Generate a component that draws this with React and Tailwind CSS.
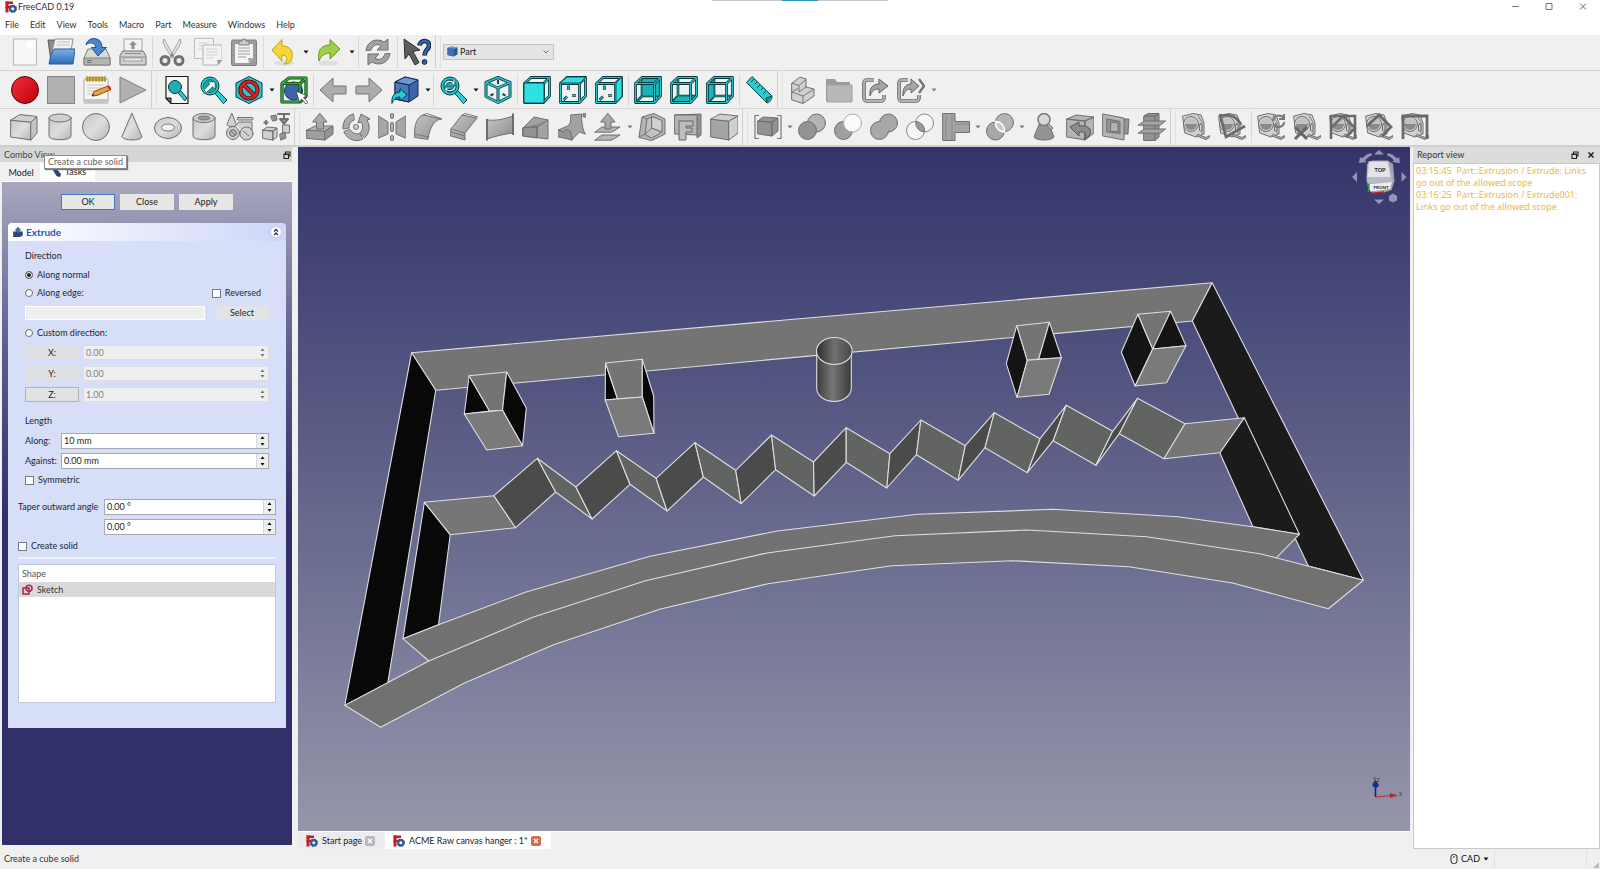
import React from "react";

/* ---------- icon helpers ---------- */

const G = { fill: "#b4b4b4", stroke: "#6f6f6f", strokeWidth: 1, strokeLinejoin: "round", strokeLinecap: "round" };
const L = { ...G, fill: "#d0d0d0" };
const D = { ...G, fill: "#939393" };
const T = { fill: "#22cfd2", stroke: "#06383c", strokeWidth: 1, strokeLinejoin: "round", strokeLinecap: "round" };

function Ic({ children }) {
  return (
    <svg viewBox="0 0 28 28" className="h-7 w-7 shrink-0" fill="none" aria-hidden="true">
      {children}
    </svg>
  );
}

const Gradients = () => (
  <svg className="absolute h-0 w-0" aria-hidden="true">
    <defs>
      <linearGradient id="lg" x1="0" y1="0" x2="1" y2="1">
        <stop offset="0" stopColor="#c6c6c6" />
        <stop offset="0.5" stopColor="#dedede" />
        <stop offset="1" stopColor="#b4b4b4" />
      </linearGradient>
      <linearGradient id="mg" x1="0" y1="0" x2="1" y2="1">
        <stop offset="0" stopColor="#c4c4c4" />
        <stop offset="1" stopColor="#8e8e8e" />
      </linearGradient>
      <linearGradient id="red" x1="0" y1="0" x2="1" y2="1">
        <stop offset="0" stopColor="#f03038" />
        <stop offset="1" stopColor="#c00008" />
      </linearGradient>
      <linearGradient id="teal" x1="0" y1="0" x2="1" y2="1">
        <stop offset="0" stopColor="#3ae6e6" />
        <stop offset="1" stopColor="#16b4ba" />
      </linearGradient>
      <linearGradient id="blue" x1="0" y1="0" x2="0" y2="1">
        <stop offset="0" stopColor="#7ab0e8" />
        <stop offset="1" stopColor="#2f6cb8" />
      </linearGradient>
    </defs>
  </svg>
);

const Logo = ({ className }) => (
  <svg viewBox="0 0 12 12" className={className} aria-hidden="true">
    <g fill="#cc1c22">
      <rect x="0.5" y="0.5" width="3" height="11" />
      <rect x="0.5" y="0.5" width="7.5" height="2.6" />
      <rect x="0.5" y="4.8" width="5" height="2.2" />
    </g>
    <circle cx="7.8" cy="7.8" r="2.6" fill="none" stroke="#33599a" strokeWidth="2.2" />
    <circle cx="7.8" cy="7.8" r="3.7" fill="none" stroke="#33599a" strokeWidth="1.1" strokeDasharray="1.5 1.4" />
  </svg>
);

const Magnifier = ({ children }) => (
  <>
    <path d="M16 17l2.6-2.6L28 24l-3.2 3.4z" {...T} />
    <circle cx="11" cy="10" r="9" fill="#22cfd2" stroke="#06383c" strokeWidth="1" />
    <circle cx="11" cy="10" r="6.6" fill="#14a2a8" stroke="#0c6d72" strokeWidth="0.8" />
    {children}
  </>
);

const FACES = {
  front: "1,7 21,7 21,27 1,27",
  top: "1,7 8,1 27,1 21,7",
  right: "21,7 27,1 27,20 21,27",
  rear: "8,1 27,1 27,20 8,20",
  bottom: "1,27 8,20 27,20 21,27",
  left: "1,7 8,1 8,20 1,27",
};

function ViewCube({ face }) {
  const behind = ["rear", "bottom", "left"].includes(face);
  const back = behind ? "M8 2V20H26.500M8 20L2 26.500" : "M9.500 9.500V14M4.500 24L8 20.500M13 19.500H17";
  const front = "M1.500 7.500H20.500V26.500H1.500zM1.500 7.500L8 1.500H26.500V20L20.500 26.500M20.500 7.500L26.500 1.500";
  return (
    <Ic>
      <path d={back} stroke="#06383c" strokeWidth="2.600" />
      <path d={back} stroke="#22b8bc" strokeWidth="1.100" />
      {behind && <polygon points={FACES[face]} fill="#19b3b8" stroke="#06383c" strokeWidth="0.600" />}
      {!behind && <polygon points={FACES[face]} fill="url(#teal)" />}
      <path d={front} stroke="#06383c" strokeWidth="2.800" strokeLinejoin="round" />
      <path d={front} stroke="#25c4c8" strokeWidth="1.200" strokeLinejoin="round" />
      {!behind && <polygon points={FACES[face]} fill="#2fe0e0" stroke="#06383c" strokeWidth="0.800" />}
    </Ic>
  );
}

const isoEdges = "M14 1.500L26 6.500V20.500L14 26.500L2 20.500V6.500zM2 6.500L14 12L26 6.500M14 12V26.500";
const IsoCube = () => (
  <Ic>
    <path d="M14 4v4M6.500 19.500l3-1.500M21.500 19.500l-3-1.500" stroke="#0c4c50" strokeWidth="2" />
    <path d={isoEdges} stroke="#06383c" strokeWidth="3" strokeLinejoin="round" />
    <path d={isoEdges} stroke="#25c4c8" strokeWidth="1.400" strokeLinejoin="round" />
  </Ic>
);

function Tape({ children }) {
  return (
    <Ic>
      <path d="M1 3l10-2.500 8 1.500 3 8v11l-8 3L3 20z" {...L} />
      <path d="M16 2.500l4 7v12" stroke="#808080" strokeWidth="1" />
      <circle cx="9" cy="11" r="7.500" {...L} />
      <path d="M3 11a6 6 0 0 0 12 0z" fill="#8a8a8a" />
      <path d="M3 11a6 6 0 0 1 12 0z" fill="#c2c2c2" />
      <rect x="17.500" y="11" width="2.500" height="7" rx="1" {...L} />
      <path d="M15 23l9 3.500 4-2.500v-1.500l-4 2-8-3z" {...G} />
      {children}
    </Ic>
  );
}

const I = {
  newDoc: (
    <Ic>
      <rect x="2.500" y="1" width="23" height="26" fill="#f6f6f6" stroke="#b8b8b8" />
      <circle cx="19" cy="7" r="4" fill="#ffffff" />
    </Ic>
  ),
  open: (
    <Ic>
      <path d="M1 2h7l1 3h15v19H4z" fill="#8a8c88" stroke="#5c5e5a" />
      <path d="M8 1h18l-2 12H5z" fill="#f2f2f2" stroke="#8c8c8c" />
      <path d="M10 4h13M9.500 7h13" stroke="#bcbcbc" strokeWidth="1.200" />
      <path d="M7 11h21l-2 15H2l2-9z" fill="url(#blue)" stroke="#2a5c9c" />
    </Ic>
  ),
  save: (
    <Ic>
      <path d="M5 11h18l4 9v7H1v-7z" fill="#d8dad6" stroke="#7e807c" />
      <path d="M1 20h26v7H1z" fill="#b4b6b2" stroke="#7e807c" />
      <path d="M4 22.500h5M4 24.500h4" stroke="#6c6c6c" />
      <path d="M3 7C4 2 9-1 15 1.500c3 1.500 4 5 4 8h4.500L15 18 8.500 9.500H13C12 5 7 3 3 7z" fill="#4a86cc" stroke="#24518c" />
    </Ic>
  ),
  print: (
    <Ic>
      <rect x="5" y="1" width="18" height="13" fill="#f4f4f4" stroke="#a4a4a4" />
      <path d="M14 3l4 4h-2.500v4h-3V7H10z" fill="#8e8e8e" />
      <path d="M4 13h20l3 5v9H1v-9z" {...L} />
      <path d="M6 15.500h16M1.500 19h25" stroke="#8c8c8c" />
      <rect x="5" y="20" width="18" height="3" fill="#ececec" stroke="#9a9a9a" />
    </Ic>
  ),
  cut: (
    <Ic>
      <path d="M6 1l10 18-2 1L5 5zM22 1L12 19l2 1 9-15z" fill="#e8e8e8" stroke="#a0a0a0" />
      <circle cx="7" cy="22.500" r="4" stroke="#707070" strokeWidth="3" />
      <circle cx="21" cy="22.500" r="4" stroke="#707070" strokeWidth="3" />
      <circle cx="14" cy="17" r="1.500" fill="#808080" />
    </Ic>
  ),
  copy: (
    <Ic>
      <rect x="0.500" y="0.500" width="19" height="20" fill="#f3f3f3" stroke="#bdbdbd" />
      <path d="M4 5h11M4 8h11M4 11h6" stroke="#d4d4d4" />
      <path d="M9 7h19v15l-4 5H9z" fill="#f3f3f3" stroke="#b4b4b4" />
      <path d="M12 11h12M12 14h12M12 17h11M12 20h8" stroke="#d0d0d0" />
      <path d="M28 22h-5l1 5z" fill="#9a9a9a" />
    </Ic>
  ),
  paste: (
    <Ic>
      <rect x="1.500" y="2" width="25" height="25.500" rx="1.500" fill="#9c9c9c" stroke="#7e7e7e" />
      <path d="M5 6h18v14l-4 5H5z" fill="#f4f4f4" />
      <path d="M8 10h12M8 13h12M8 16h12M8 19h8" stroke="#bcbcbc" strokeWidth="1.300" />
      <path d="M9 3h3a2 2 0 0 1 4 0h3v4H9z" fill="#c8c8c8" stroke="#7e7e7e" />
      <path d="M23 20h-5l1 5z" fill="#aaa" />
    </Ic>
  ),
  undo: (
    <Ic>
      <ellipse cx="15" cy="25" rx="10" ry="2.500" fill="#dedede" />
      <path d="M3 12L13 1.500V8c9 0 12 6 9.500 14C21 25 18 26 15 26c4-3 4-9-2-9v6z" fill="#f5d838" stroke="#c8a010" strokeLinejoin="round" />
    </Ic>
  ),
  redo: (
    <Ic>
      <ellipse cx="13" cy="25" rx="10" ry="2.500" fill="#dedede" />
      <path d="M25 11L15 1.500V7C6 7 2 13 4 23c2-5 5-8 11-8v6z" fill="#9fd046" stroke="#689a20" strokeLinejoin="round" />
    </Ic>
  ),
  refresh: (
    <Ic>
      <path d="M2 12C3 4 12-1 20 4l4-3v11H13l4-4c-4-3-8-1-10 4z" {...G} fill="#a2a2a2" />
      <path d="M26 16c-1 8-10 13-18 8l-4 3V16h11l-4 4c4 3 8 1 10-4z" {...G} fill="#a2a2a2" />
    </Ic>
  ),
  whats: (
    <Ic>
      <path d="M1 1l16 11-7 1.500 6 11-4 2.500-6-11-4 5z" fill="#5c5f5c" stroke="#303230" />
      <path d="M16.500 7.500C17 2 26 1 26 7.500c0 4.500-4.500 4-4.500 10" stroke="#14223c" strokeWidth="4.600" />
      <path d="M16.500 7.500C17 2 26 1 26 7.500c0 4.500-4.500 4-4.500 10" stroke="#3a68a8" strokeWidth="2.400" />
      <circle cx="21.500" cy="24" r="2.400" fill="#3a68a8" stroke="#14223c" />
    </Ic>
  ),
  record: <Ic><circle cx="14" cy="14" r="13.500" fill="url(#red)" stroke="#4c0808" /></Ic>,
  stop: <Ic><rect x="0.500" y="0.500" width="27" height="27" fill="#b0b0b0" stroke="#858585" /></Ic>,
  macros: (
    <Ic>
      <rect x="1" y="3" width="24" height="24" rx="1" fill="#f6f6f4" stroke="#a8a8a4" />
      <path d="M1 23h24v4H1z" fill="#c4c4c0" />
      <path d="M3 1h20v4H3z" fill="#c8ac3c" />
      <path d="M4 0v6M7 0v6M10 0v6M13 0v6M16 0v6M19 0v6M22 0v6" stroke="#9c842c" />
      <path d="M4 9h17M4 12h17M4 15h12M4 18h9" stroke="#c4c4c4" />
      <path d="M9 20l2-4.500L25 10l3 3.500L14 19.500z" fill="#e8a040" stroke="#8a5010" />
      <path d="M24 10.500l2-1 2.500 3-1.500 1.500z" fill="#d02020" />
      <path d="M9 20l1-2 1.500 1.500z" fill="#222" />
    </Ic>
  ),
  play: <Ic><path d="M1 1L27 14L1 27z" fill="#b0b0b0" stroke="#808080" /></Ic>,
  fitAll: (
    <Ic>
      <path d="M3 0.500h22v27H8l-5-5z" fill="#f6f6f6" stroke="#1c1c1c" strokeWidth="1.200" />
      <path d="M3 22l5 0v5.500z" fill="#707070" stroke="#1c1c1c" />
      <path d="M15 16l2-2 7 8-2 2.500z" {...T} />
      <circle cx="12" cy="11" r="6.500" {...T} fill="#1cb0b6" />
    </Ic>
  ),
  fitSel: (
    <Ic>
      <Magnifier><path d="M5 14l6-6-2-2h7v7l-2.500-2.500-6 6z" fill="#fff" stroke="#083c40" strokeWidth="0.500" /></Magnifier>
    </Ic>
  ),
  drawStyle: (
    <Ic>
      <path d="M14 0.500L27 7v14l-13 6.500L1 21V7z" fill="#2cc4cc" stroke="#0a3c44" />
      <circle cx="14" cy="14" r="8.500" stroke="#4c0808" strokeWidth="4.200" />
      <path d="M8 8l12 12" stroke="#4c0808" strokeWidth="4.200" />
      <circle cx="14" cy="14" r="8.500" stroke="#d42428" strokeWidth="2.600" />
      <path d="M8 8l12 12" stroke="#d42428" strokeWidth="2.600" />
    </Ic>
  ),
  boxSel: (
    <Ic>
      <circle cx="13.500" cy="15" r="9" fill="#3c66a8" stroke="#16305c" />
      <path d="M2 7.500h18v18.500H2zM2 7.500L9 2h17v18l-6 6M20 7.500L26 2" stroke="#0c3c10" strokeWidth="3.200" strokeLinejoin="round" />
      <path d="M2 7.500h18v18.500H2zM2 7.500L9 2h17v18l-6 6M20 7.500L26 2" stroke="#34b03c" strokeWidth="1.600" strokeLinejoin="round" />
      <path d="M16 15l11 5-3.500 1.500 4.500 5-2 1.500-4.500-5-2 3.500z" fill="#fff" stroke="#222" strokeWidth="0.700" />
    </Ic>
  ),
  prev: <Ic><path d="M1 14L14 2v8h13v8H14v8z" fill="#adadad" stroke="#757575" /></Ic>,
  next: <Ic><path d="M27 14L14 2v8H1v8h13v8z" fill="#adadad" stroke="#757575" /></Ic>,
  linkNav: (
    <Ic>
      <path d="M4 6l10-5 13 3v16l-9 6-14-3z" fill="#3a66aa" stroke="#12284c" />
      <path d="M4 6l14 3v17l-14-3z" fill="#4a78bc" stroke="#12284c" />
      <path d="M4 6l10-5 13 3-9 5z" fill="#6a98d4" stroke="#12284c" />
      <path d="M1 27c-1-7 3-11 8-11v-3.500l7 6.500-7 6v-4c-4 0-6 2-8 6z" {...T} />
    </Ic>
  ),
  syncView: (
    <Ic>
      <Magnifier>
        <path d="M6 9c1-4 7-5 9-1.500M15 4v4h-4M16 11c-1 4-7 5-9 1.500M7 16v-4h4" stroke="#083c40" strokeWidth="2.600" />
        <path d="M6 9c1-4 7-5 9-1.500M15 4v4h-4M16 11c-1 4-7 5-9 1.500M7 16v-4h4" stroke="#dff" strokeWidth="1.200" />
      </Magnifier>
    </Ic>
  ),
  ruler: (
    <Ic>
      <path d="M7 0.500L27 20c0 3-1.500 6-5 7L1.500 6.500z" fill="#25cdd2" stroke="#06484c" />
      <path d="M22 27l-1-5 6-2" fill="#128c92" stroke="#06484c" />
      <path d="M9 3l-3 3M12 6l-2 2M15 9l-3 3M18 12l-2 2M21 15l-3 3" stroke="#06484c" />
    </Ic>
  ),
  linkGroup: (
    <Ic>
      <path d="M3 7l8-6 6 2v8l8 2v7l-11 7.500L3 24z" {...L} />
      <path d="M3 7l7 2.500 7-6M10 9.500v6.500M3 16l11 4v7M14 20l11-7M3 16l6-3.500M10 16l7-5" stroke="#777" />
    </Ic>
  ),
  folder: (
    <Ic>
      <path d="M1 3h9l2 3h13v19H1z" fill="#9c9c9c" />
      <path d="M2 9h25v17H2z" fill="#b8b8b8" stroke="#a0a0a0" />
    </Ic>
  ),
  share: (
    <Ic>
      <path d="M13 4H6a3 3 0 0 0-3 3v15a3 3 0 0 0 3 3h14a3 3 0 0 0 3-3v-3" stroke="#666" strokeWidth="3.600" />
      <path d="M13 4H6a3 3 0 0 0-3 3v15a3 3 0 0 0 3 3h14a3 3 0 0 0 3-3v-3" stroke="#b4b4b4" strokeWidth="1.800" />
      <path d="M9 20c-1-8 3-12 9-12V3l9 7-9 7v-4c-5 0-7 2-9 7z" fill="#a4a4a4" stroke="#666" />
    </Ic>
  ),
  shareAll: (
    <Ic>
      <path d="M11 4H5a3 3 0 0 0-3 3v15a3 3 0 0 0 3 3h14a3 3 0 0 0 3-3v-3" stroke="#666" strokeWidth="3.600" />
      <path d="M11 4H5a3 3 0 0 0-3 3v15a3 3 0 0 0 3 3h14a3 3 0 0 0 3-3v-3" stroke="#b4b4b4" strokeWidth="1.800" />
      <path d="M6 20c-1-8 3-12 8-12V3l8 7-8 7v-4c-4 0-6 2-8 7z" fill="#a4a4a4" stroke="#666" />
      <path d="M22 3l5 7-5 7" stroke="#777" strokeWidth="2.400" />
    </Ic>
  ),
  cube: (
    <Ic>
      <path d="M1 7l20 2v18L1 24z" {...G} fill="url(#lg)" />
      <path d="M1 7l9-5.500 17 2L21 9z" {...L} />
      <path d="M21 9l6-5.500V20l-6 7z" {...G} fill="#c4c4c4" />
    </Ic>
  ),
  cylinder: (
    <Ic>
      <path d="M3 5v18c0 5 22 5 22 0V5" {...G} fill="url(#lg)" />
      <ellipse cx="14" cy="5" rx="11" ry="4" {...L} />
    </Ic>
  ),
  sphere: <Ic><circle cx="14" cy="14" r="13.500" {...G} fill="url(#lg)" /></Ic>,
  cone: <Ic><path d="M14 0.500L24 24c-2 4-18 4-20 0z" {...G} fill="url(#lg)" /></Ic>,
  torus: (
    <Ic>
      <ellipse cx="14" cy="15" rx="13.500" ry="10.500" {...G} fill="url(#lg)" />
      <ellipse cx="14" cy="14.500" rx="6.500" ry="3.500" fill="#f4f4f4" stroke="#777" />
    </Ic>
  ),
  tube: (
    <Ic>
      <path d="M3 5v18c0 5 22 5 22 0V5" {...G} fill="url(#lg)" />
      <ellipse cx="14" cy="5" rx="11" ry="4.500" {...L} />
      <ellipse cx="14" cy="5" rx="6" ry="2" fill="#999" stroke="#777" />
    </Ic>
  ),
  primitives: (
    <Ic>
      <path d="M10 12l3-3h13v10l-3 3" {...L} />
      <path d="M6 0.500L10.500 12c-1 2-8 2-9.500 0z" {...L} />
      <rect x="11" y="4.500" width="16" height="2.500" rx="1" {...L} />
      <circle cx="7" cy="20" r="6.500" {...L} />
      <circle cx="7" cy="20" r="3.500" {...G} />
      <circle cx="20.500" cy="20.500" r="6.500" {...L} />
      <path d="M5 18l4 4M17 18l6 5" stroke="#777" />
    </Ic>
  ),
  builder: (
    <Ic>
      <path d="M1 17l10 1v9L1 25.500zM1 17l4-3 10 1-4 3zM11 18l4-3v9l-4 3z" {...L} />
      <path d="M16 1h12M22 2v4M18 6h8l-4 5z" {...D} strokeWidth="2" />
      <path d="M4 7v5M1.500 9.500h5" stroke="#777" strokeWidth="2" />
      <path d="M9 3l5-1 1 5-4 1z" {...D} />
      <rect x="21" y="12" width="6.500" height="8" {...L} />
      <path d="M18 21l5-2 1 6-5 2z" {...D} />
    </Ic>
  ),
  extrude: (
    <Ic>
      <path d="M1 17l18 1v9L1 25.500z" {...G} fill="#9f9f9f" />
      <path d="M1 17l8-4h18l-8 5z" {...G} />
      <path d="M19 18l8-5v8l-8 6z" {...D} />
      <path d="M14 0.500L21 9h-3.500v7h-7V9H7z" {...G} fill="#a8a8a8" />
    </Ic>
  ),
  revolve: (
    <Ic>
      <path d="M11 1A13.500 13.500 0 0 0 1 16l6-1a8 8 0 0 1 5-8zM2 19a13.500 13.500 0 0 0 19 7l-3-5.500a8 8 0 0 1-10-4zM23 24.500A13.500 13.500 0 0 0 25 7l3-1-9-5-3 9 3-1a8 8 0 0 1-1 11z" {...G} fill="#acacac" />
      <circle cx="14" cy="14" r="2.500" {...L} />
    </Ic>
  ),
  mirror: (
    <Ic>
      <path d="M0.500 3L10 9v12L0.500 25zM27.500 3L18 9v12l9.500 4z" {...G} fill="#a6a6a6" />
      <path d="M14 2v2M14 11v6M14 24v2" stroke="#6f6f6f" strokeWidth="4" strokeLinecap="round" />
      <path d="M14 2v2M14 11v6M14 24v2" stroke="#b4b4b4" strokeWidth="2" strokeLinecap="round" />
    </Ic>
  ),
  fillet: (
    <Ic>
      <path d="M0.500 24C0 12 3 4 9 2l19 4c-6 0-12 6-14 20z" {...G} fill="url(#mg)" />
      <path d="M9 2l4-1.500L28 6M0.500 21l14 3" stroke="#777" />
    </Ic>
  ),
  chamfer: (
    <Ic>
      <path d="M1 16L12 2l15 3-12 15v7L1 23z" {...G} fill="url(#mg)" />
      <path d="M1 16l14 4M12 2l3-1.500L28 4M1 19l14 4" stroke="#777" />
    </Ic>
  ),
  ruled: (
    <Ic>
      <path d="M1 7c10 1 17-1 26-4v17c-9 1-17 3-26 6z" {...G} fill="url(#mg)" />
      <path d="M1 6v21.500M27 0.500V22" stroke="#6c6c6c" strokeWidth="2" />
    </Ic>
  ),
  loft: (
    <Ic>
      <path d="M1 15L12 4l14 3v19L1 23z" {...G} fill="#a2a2a2" />
      <path d="M1 15l14-1L26 7M15 14v10M1 15v8l14 2V14z" {...D} />
    </Ic>
  ),
  sweep: (
    <Ic>
      <path d="M0.500 17l9-4c4-2 3-8 3-11l11-1c0 8 1 16 4 20l-6-2-8 8z" {...G} fill="#a2a2a2" />
      <path d="M0.500 17l5 2c2-3 6-3 7 0l2 8-14-3z" {...D} />
      <ellipse cx="26.500" cy="2" rx="1.500" ry="2.500" {...D} />
    </Ic>
  ),
  offset: (
    <Ic>
      <path d="M1 19l7-5h18l-8 5zM1 27l7-5h18l-8 5z" {...G} />
      <path d="M14 0.500L21 9h-4v7h-6V9H7z" {...G} fill="#a6a6a6" />
    </Ic>
  ),
  thickness: (
    <Ic>
      <path d="M1 24L4 4l12-3.500L27 6v15l-13 6.500z" {...G} />
      <path d="M7 21L9 6l5-2v11l10 4-10 6z" {...G} fill="#c2c2c2" />
      <path d="M14 3.500L24 7.500V19l-10-4z" {...L} />
      <path d="M14 15l-7 6M1 24l6-3M4 4l5 2" stroke="#777" />
    </Ic>
  ),
  projection: (
    <Ic>
      <path d="M1 2l26-1v21l-4 3V3z" {...D} />
      <path d="M1 2h22v20l-22-1z" {...G} />
      <g fill="#bdbdbd" stroke="#666">
        <path d="M5 8h14v5h-7v2h6v4h-6v8H5z" />
      </g>
    </Ic>
  ),
  faceColor: (
    <Ic>
      <path d="M1 6l18 2v19L1 24z" {...G} fill="#a4a4a4" />
      <path d="M1 6l9-5 18 2-9 5z" {...L} />
      <path d="M19 8l9-5v17l-9 7z" {...L} />
    </Ic>
  ),
  compound: (
    <Ic>
      <path d="M4 8l14 1v14L4 21zM4 8l5-4 15 1-6 4zM18 9l6-4v13l-6 5z" {...D} />
      <path d="M5 2.500H1v23h4M23 2.500h4v23h-4" stroke="#777" strokeWidth="1.200" />
    </Ic>
  ),
  boolean: (
    <Ic>
      <circle cx="18.500" cy="10" r="9" {...G} />
      <circle cx="9.500" cy="17.500" r="9" {...D} />
    </Ic>
  ),
  cutOp: (
    <Ic>
      <circle cx="9.500" cy="17.500" r="9" {...G} fill="#a0a0a0" />
      <circle cx="18.500" cy="10" r="9" fill="#fbfbfb" stroke="#aaa" />
    </Ic>
  ),
  union: (
    <Ic>
      <circle cx="18.500" cy="10" r="9" {...G} fill="#a8a8a8" />
      <circle cx="9.500" cy="17.500" r="9" {...G} fill="#a8a8a8" />
      <circle cx="14" cy="13.500" r="6" fill="#a8a8a8" />
    </Ic>
  ),
  common: (
    <Ic>
      <circle cx="18.500" cy="10" r="9" fill="#f6f6f6" stroke="#8a8a8a" />
      <circle cx="9.500" cy="17.500" r="9" fill="#f6f6f6" stroke="#8a8a8a" />
      <path d="M9.800 8.600A9 9 0 0 1 18.300 19 9 9 0 0 1 9.800 8.600z" fill="#9a9a9a" stroke="#777" />
    </Ic>
  ),
  join: (
    <Ic>
      <path d="M1 0.500h12v8h14.500v11H13v8H1z" {...G} fill="#a4a4a4" />
      <path d="M4 0.500v27M10 0.500v27M13 11h14" stroke="#888" />
    </Ic>
  ),
  split: (
    <Ic>
      <circle cx="18.500" cy="9.500" r="9" {...G} />
      <circle cx="9.500" cy="18" r="9" {...G} fill="#a8a8a8" />
      <path d="M9.800 8.600A9 9 0 0 1 18.300 19 9 9 0 0 1 9.800 8.600z" fill="#c8c8c8" stroke="#fff" strokeWidth="1.500" />
    </Ic>
  ),
  check: (
    <Ic>
      <path d="M10 9l-6 15c2 4 18 4 20 0L18 9z" {...D} />
      <path d="M17 9l6 6-2 2-5-6z" {...G} />
      <circle cx="14" cy="6.500" r="6" fill="#d8d8d8" stroke="#777" strokeWidth="1.500" />
    </Ic>
  ),
  defeature: (
    <Ic>
      <path d="M1 6l18 2v19L1 24zM1 6l9-4 18 2-9 4zM19 8l9-4v16l-9 7z" {...G} />
      <path d="M4 14l9-5v4c9-1 13 3 11 8-1 3-3 4-6 5 4-5 1-8-5-7v4z" fill="#8c8c8c" stroke="#555" />
    </Ic>
  ),
  section: (
    <Ic>
      <path d="M19 6h8l-1 15h-8z" {...D} />
      <path d="M1 1l21 4v22L1 23z" {...G} />
      <path d="M5 6l13 2.500v12L5 19z" {...D} />
      <path d="M9 9l7 1v9l-7-1z" {...G} />
    </Ic>
  ),
  crossSections: (
    <Ic>
      <path d="M6 3l4-2.500h11V24l-4 3.500H6z" {...D} />
      <path d="M6 3h11l4-2.500M17 3v24" stroke="#666" />
      <path d="M0.500 12l6-4h21l-5 4zM0.500 20l6-4h21l-5 4z" {...G} fill="#a4a4a4" />
    </Ic>
  ),
  mLinear: <Tape />,
  mAngular: <Tape><path d="M2 1l6 23L27 13M3 3c8-3 17 1 20 9" stroke="#6a6a6a" strokeWidth="2.600" /></Tape>,
  mRefresh: <Tape><path d="M16 8c0-6 8-7 11-3M27 1v5h-5M27 9c0 6-8 6-10 3" stroke="#7a7a7a" strokeWidth="2.200" /></Tape>,
  mClear: <Tape><path d="M2 14l12 12M14 14L2 26" stroke="#666" strokeWidth="3" /></Tape>,
  mToggleAll: <Tape><path d="M2 26V3h24v23M2 15L14 3l12 12-9 9" stroke="#6a6a6a" strokeWidth="2.600" /></Tape>,
  mToggle3d: <Tape><path d="M2 13L14 2l12 12-9 9" stroke="#6a6a6a" strokeWidth="2.800" /></Tape>,
  mToggleDelta: <Tape><path d="M2 26V3h24v23" stroke="#6a6a6a" strokeWidth="2.800" /></Tape>,
};

/* ---------- toolbars ---------- */

const Tool = ({ label, children }) => (
  <button type="button" aria-label={label} className="flex h-9 w-9 shrink-0 items-center justify-center">
    {children}
  </button>
);
const Drop = ({ className = "w-2", dim }) => (
  <span className={"flex shrink-0 justify-center " + className}>
    <svg viewBox="0 0 6 4" className="h-1 w-1.5" aria-hidden="true">
      <path d="M0.500 0.500h5L3 3.500z" fill={dim ? "#7a7a7a" : "#111"} />
    </svg>
  </span>
);
const Sep = () => <span className="mx-px h-8 w-px shrink-0 bg-[#dadada]" />;
const Break = () => (
  <span className="flex h-full w-2 shrink-0 items-center gap-1">
    <span className="h-full w-px bg-[#cfcfcf]" />
    <span className="h-8 w-px bg-[#e0e0e0]" />
  </span>
);

function Tools({ items, drop, dim }) {
  return items.map((it, i) => {
    if (it === "|") return <Sep key={i} />;
    if (it === "||") return <Break key={i} />;
    if (it === "v") return <Drop key={i} className={drop} dim={dim} />;
    return (
      <Tool key={i} label={it[1]}>
        {typeof it[0] === "string" ? I[it[0]] : it[0]}
      </Tool>
    );
  });
}

const FILE_TOOLS = [
  ["newDoc", "New"], ["open", "Open"], ["save", "Save"], ["print", "Print"], "|",
  ["cut", "Cut"], ["copy", "Copy"], ["paste", "Paste"], "|",
  ["undo", "Undo"], "v", ["redo", "Redo"], "v", "|",
  ["refresh", "Refresh"], "|", ["whats", "What's this?"], "||",
];
const VIEW_TOOLS = [
  ["record", "Record macro"], ["stop", "Stop macro"], ["macros", "Macros"], ["play", "Execute macro"], "||",
  ["fitAll", "Fit all"], ["fitSel", "Fit selection"], ["drawStyle", "Draw style"], "v", ["boxSel", "Bounding box"], "|",
  ["prev", "Back"], ["next", "Forward"], ["linkNav", "Go to linked object"], "v", "|",
  ["syncView", "Sync view"], "v", [<IsoCube />, "Isometric"], "|",
  [<ViewCube face="front" />, "Front"], [<ViewCube face="top" />, "Top"], [<ViewCube face="right" />, "Right"], "|",
  [<ViewCube face="rear" />, "Rear"], [<ViewCube face="bottom" />, "Bottom"], [<ViewCube face="left" />, "Left"], "|",
  ["ruler", "Measure distance"], "||",
  ["linkGroup", "Create part"], ["folder", "Create group"], ["share", "Make link"], ["shareAll", "Link actions"],
];
const PART_TOOLS = [
  ["cube", "Cube"], ["cylinder", "Cylinder"], ["sphere", "Sphere"], ["cone", "Cone"], ["torus", "Torus"], ["tube", "Tube"],
  ["primitives", "Create primitives"], ["builder", "Shape builder"], "||",
  ["extrude", "Extrude"], ["revolve", "Revolve"], ["mirror", "Mirror"], ["fillet", "Fillet"], ["chamfer", "Chamfer"],
  ["ruled", "Ruled surface"], ["loft", "Loft"], ["sweep", "Sweep"], ["offset", "Offset"], "v",
  ["thickness", "Thickness"], ["projection", "Projection on surface"], ["faceColor", "Color per face"], "||",
  ["compound", "Compound"], "v", ["boolean", "Boolean"], ["cutOp", "Cut"], ["union", "Union"], ["common", "Intersection"],
  ["join", "Join"], "v", ["split", "Split"], "v", ["check", "Check geometry"], ["defeature", "Defeaturing"],
  ["section", "Section"], ["crossSections", "Cross-sections"], "||",
  ["mLinear", "Measure linear"], ["mAngular", "Measure angular"], "|",
  ["mRefresh", "Measure refresh"], ["mClear", "Measure clear all"], ["mToggleAll", "Toggle all"],
  ["mToggle3d", "Toggle 3D"], ["mToggleDelta", "Toggle delta"],
];

/* ---------- form controls ---------- */

const Radio = ({ label, defaultChecked }) => (
  <label className="flex h-3.5 items-center gap-1">
    <input
      type="radio"
      name="direction"
      defaultChecked={defaultChecked}
      className="h-2 w-2 appearance-none rounded-full border border-[#6b6b6b] bg-white checked:bg-[#222] checked:shadow-[inset_0_0_0_1px_#fff]"
    />
    {label}
  </label>
);
const Check = ({ label }) => (
  <label className="flex h-3.5 items-center gap-1">
    <input type="checkbox" className="h-[9px] w-[9px] appearance-none border border-[#7b7b83] bg-white" />
    {label}
  </label>
);

function Spin({ label, value, disabled }) {
  const c = disabled ? "#777" : "#111";
  return (
    <div className={"flex h-full min-w-0 flex-1 border " + (disabled ? "border-[#dcdce2] bg-[#efefef]" : "border-[#a8a8b0] bg-white")}>
      <input
        aria-label={label}
        defaultValue={value}
        disabled={disabled}
        className={"min-w-0 flex-1 bg-transparent px-0.5 outline-none " + (disabled ? "text-[#828282]" : "text-[#1c1c1c]")}
      />
      <span className={"flex w-3 flex-col " + (disabled ? "" : "border-l border-[#d8d8d8] bg-[#efefef]")}>
        <button type="button" aria-label={label + " up"} disabled={disabled} className="flex flex-1 items-center justify-center">
          <svg viewBox="0 0 5 3" className="h-[3px] w-[5px]"><path d="M0.500 3L2.500 0.300L4.500 3z" fill={c} /></svg>
        </button>
        <button type="button" aria-label={label + " down"} disabled={disabled} className="flex flex-1 items-center justify-center">
          <svg viewBox="0 0 5 3" className="h-[3px] w-[5px]"><path d="M0.500 0L2.500 2.700L4.500 0z" fill={c} /></svg>
        </button>
      </span>
    </div>
  );
}

const FloatIcon = () => (
  <svg viewBox="0 0 8 8" className="h-2 w-2" fill="none" stroke="#222" aria-hidden="true">
    <path d="M2.500 2.500V1H7v4H5.500M1 3h4.500v4.500H1zM1 3.500h4.500" strokeWidth="1.100" />
  </svg>
);
const CloseIcon = () => (
  <svg viewBox="0 0 8 8" className="h-2 w-2" stroke="#222" strokeWidth="1.500" aria-hidden="true">
    <path d="M1.500 1.500l5 5M6.500 1.500l-5 5" />
  </svg>
);

function ComboView() {
  const btn = "h-4 w-[54px] bg-[#e6e6e4] text-[#1c1c1c]";
  return (
    <aside className="flex w-[292px] shrink-0 flex-col bg-[#f0f0f0]">
      <header className="relative flex h-[15px] items-center justify-between bg-[#d6d6d6] pr-px pl-1 text-[#444]">
        <span>Combo View</span>
        <button type="button" aria-label="Float combo view"><FloatIcon /></button>
        <div role="tooltip" className="absolute top-2 left-11 z-10 flex h-3.5 items-center border border-[#8c8c8c] bg-white px-[3px] whitespace-nowrap text-[#666] shadow-[1px_1px_1px_#777]">
          Create a cube solid
        </div>
      </header>
      <div role="tablist" className="flex h-[19px] items-end px-0.5">
        <button type="button" role="tab" aria-selected="false" className="h-[17px] w-[38px] px-1.5 text-[#1c1c1c]">Model</button>
        <button type="button" role="tab" aria-selected="true" className="flex h-[18px] w-[55px] items-center gap-1 bg-white pl-3 text-[#1c1c1c]">
          <svg viewBox="0 0 9 9" className="h-[9px] w-[9px]" aria-hidden="true"><path d="M0.500 1l3-1 5 6-0.500 2.500-3-0.500z" fill="#2c4878" stroke="#16243c" strokeWidth="0.600" /></svg>
          Tasks
        </button>
      </div>
      <div className="ml-0.5 flex min-h-0 flex-1 flex-col border-t border-white bg-linear-to-b from-[#a9a8bf] from-0% via-[#5f5d8c] via-25% to-[#31306a] to-50% px-1.5">
        <div className="mt-3 flex h-4 justify-center gap-[5px]">
          <button type="button" className={btn + " border border-[#3c7cc4]"}>OK</button>
          <button type="button" className={btn}>Close</button>
          <button type="button" className={btn}>Apply</button>
        </div>
        <section className="mt-[13px] rounded-t-sm bg-[#d7dff8] pb-[25px] text-[#1c2430]">
          <header className="flex h-[18px] items-center gap-[3px] rounded-t-sm bg-linear-to-r from-white to-[#ccd6f8] pr-1 pl-[5px]">
            <svg viewBox="0 0 28 28" className="h-2.5 w-2.5" aria-hidden="true">
              <path d="M1 13h26v10l-8 5H1z" fill="#2c4c80" stroke="#14284c" />
              <path d="M14 0l8 9h-4v8h-8V9H6z" fill="#4a70b0" stroke="#14284c" />
            </svg>
            <h2 className="flex-1 text-[10px] font-bold text-[#2458c4]">Extrude</h2>
            <button type="button" aria-label="Collapse" className="flex h-3 w-3 items-center justify-center rounded-full border border-[#c4cce4] bg-white">
              <svg viewBox="0 0 6 8" className="h-2 w-1.5" fill="none" stroke="#22306c" strokeWidth="1.300"><path d="M1 3.500l2-2 2 2M1 7l2-2 2 2" /></svg>
            </button>
          </header>
          <form className="flex flex-col px-2.5 pt-2" onSubmit={(e) => e.preventDefault()}>
            <fieldset className="flex flex-col px-[7px]">
              <span className="h-3.5 leading-[14px]">Direction</span>
              <div className="mt-[5px]"><Radio label="Along normal" defaultChecked /></div>
              <div className="mt-1 flex justify-between pr-2">
                <Radio label="Along edge:" />
                <Check label="Reversed" />
              </div>
              <div className="mt-1.5 flex h-3.5 gap-2.5">
                <input aria-label="Edge" disabled className="min-w-0 flex-1 border border-white bg-[#efefef]" />
                <button type="button" className="w-[54px] bg-[#e2e3e6]">Select</button>
              </div>
              <div className="mt-1.5"><Radio label="Custom direction:" /></div>
              <div className="mt-[5px] flex h-[15px] gap-1">
                <button type="button" className="w-[54px] bg-[#dfe0e4]">X:</button>
                <Spin label="X" value="0.00" disabled />
              </div>
              <div className="mt-1.5 flex h-[15px] gap-1">
                <button type="button" className="w-[54px] bg-[#dfe0e4]">Y:</button>
                <Spin label="Y" value="0.00" disabled />
              </div>
              <div className="mt-1.5 flex h-[15px] gap-1">
                <button type="button" className="w-[54px] border border-[#b4b4b8] bg-[#e2e2e2]">Z:</button>
                <Spin label="Z" value="1.00" disabled />
              </div>
            </fieldset>
            <fieldset className="mt-3 flex flex-col px-[7px]">
              <span className="h-3.5 leading-[14px]">Length</span>
              <div className="mt-[5px] flex h-4 items-center"><span className="w-9">Along:</span><Spin label="Along" value="10 mm" /></div>
              <div className="mt-1 flex h-4 items-center"><span className="w-9">Against:</span><Spin label="Against" value="0.00 mm" /></div>
              <div className="mt-1"><Check label="Symmetric" /></div>
            </fieldset>
            <div className="mt-3 flex h-4 items-center"><span className="w-[86px]">Taper outward angle</span><Spin label="Taper outward angle" value="0.00 °" /></div>
            <div className="mt-1 flex h-4 items-center pl-[86px]"><Spin label="Taper inward angle" value="0.00 °" /></div>
            <div className="mt-1"><Check label="Create solid" /></div>
            <hr className="mt-1 h-0.5 border-0 bg-[#edf1fc]" />
            <div className="mt-[5px] h-[139px] border border-[#c4c8d8] bg-white text-[#555]">
              <table className="w-full text-left">
                <thead><tr className="h-[17px]"><th className="p-0 pl-[3px] font-normal">Shape</th></tr></thead>
                <tbody>
                  <tr className="h-[15px] bg-[#dadada]">
                    <td className="p-0 pl-[3px] text-[#333]">
                      <span className="flex items-center gap-1">
                        <svg viewBox="0 0 11 11" className="h-[11px] w-[11px]" fill="none" stroke="#a82848" strokeWidth="1.500"><path d="M1 4h6v6H1z" /><circle cx="7" cy="4.200" r="3" /></svg>
                        Sketch
                      </span>
                    </td>
                  </tr>
                </tbody>
              </table>
            </div>
          </form>
        </section>
      </div>
    </aside>
  );
}

/* ---------- 3D scene ---------- */

const UP = [[424.4,502.3],[493.9,495.7],[537.3,458.3],[575.9,487],[616.5,450.7],[656.1,478.3],[695,442.7],[735.7,470.3],[771.5,435],[813.5,462],[846.2,427.7],[889.9,453.7],[920.9,420],[965.3,445.7],[994.3,412.7],[1040.1,438.7],[1066.2,405.3],[1112.7,431.3],[1137.5,398.3],[1185,423.7],[1244.3,417.7]];
const LOW = [[450.2,534.7],[515.6,527.7],[555.6,492],[592.1,519],[630,484.3],[667.1,511],[703.3,477],[741.2,503.7],[775.6,469.7],[814.2,496],[846.2,462.3],[886.8,488],[916.4,454.7],[958.1,480.3],[985,447.7],[1027.3,472.7],[1053.2,440.7],[1095.9,465.3],[1119.3,433.7],[1164,458.7],[1219.8,452.7]];
const zigFill = (i) => (i === 0 || i === UP.length - 2 ? "#767676" : i % 2 ? "#4b4b4b" : "#626462");

const P = ({ p, f }) => <polygon points={p} fill={f} />;
const GREY = "#747474";

function Scene() {
  return (
    <svg viewBox="298 147 1112 684" preserveAspectRatio="xMidYMid meet" className="h-full w-full" role="img" aria-label="3D view of the extruded sketch">
      <defs>
        <linearGradient id="cylOut" x1="0" x2="1">
          <stop offset="0" stopColor="#3c3c3c" /><stop offset="0.450" stopColor="#767676" /><stop offset="1" stopColor="#3a3a3a" />
        </linearGradient>
        <linearGradient id="cylIn" x1="0" x2="1">
          <stop offset="0" stopColor="#2c2c2c" /><stop offset="0.500" stopColor="#707070" /><stop offset="1" stopColor="#484848" />
        </linearGradient>
      </defs>
      <g stroke="#dedee2" strokeWidth="1.100" strokeLinejoin="round">
        <P p="411.600,352.700 1212.200,282.700 1192.300,321 435.700,390.300" f={GREY} />
        <P p="411.600,352.700 435.700,390.300 387.900,682.300 380.600,715 344.800,705.300" f="#080808" />
        <P p="1212.200,282.700 1363.400,580.300 1308.300,566 1192.300,321" f="#1b1b1b" />
        <P p="424.400,502.300 450.200,534.700 438.500,624.700 403,638.700" f="#080808" />
        <P p="1244.300,417.700 1299.400,534.300 1252.900,526.700 1219.800,452.700" f="#1b1b1b" />
        {UP.slice(0, -1).map((u, i) => (
          <polygon key={i} points={[u, UP[i + 1], LOW[i + 1], LOW[i]].join(" ")} fill={zigFill(i)} />
        ))}
        <P p="403,638.700 438.500,624.700 526,592 650,556.300 777.300,531 917.500,514.300 1052.800,509.300 1177.500,516.700 1252.900,526.700 1299.400,534.300 1276.600,557.700 1146.500,545 1027,540 895,545 767,562 532.800,630 428.800,661" f="#717271" />
        <P p="344.800,705.300 428.800,661 532.800,617.300 645.400,580.700 767,553 895,535.700 1027,530 1146.500,536.700 1260,553.700 1363.400,580.300 1328.300,608.700 1232.600,583 1129,566.700 1012,560.700 891.700,565.700 768,583.700 659.600,609.300 553.500,644.700 464,683.300 380.600,727.300" f="#707170" />

        <P p="469.100,375.700 489.500,411 464.300,414" f="#080808" />
        <P p="469.100,375.700 506.700,372 502.500,410.300 489.500,411" f={GREY} />
        <P p="506.700,372 526.300,408 522.500,445.700 502.500,410.300" f="#080808" />
        <P p="464.300,414 502.500,410.300 522.500,445.700 486.700,450" f="#7a7a7a" />

        <P p="605.500,363 617.500,398.700 605.200,400" f="#080808" />
        <P p="605.500,363 642.300,359.300 642.300,397 617.500,398.700" f={GREY} />
        <P p="642.300,359.300 653.700,396 654,433.300 642.300,397" f="#080808" />
        <P p="605.200,400 642.300,397 654,433.300 618.600,436.700" f="#7a7a7a" />

        <P p="1016.700,325.700 1027.300,360.300 1017,397.300 1006.300,363.700" f="#141414" />
        <P p="1016.700,325.700 1049.400,322.300 1038.700,359 1027.300,360.300" f={GREY} />
        <P p="1049.400,322.300 1061.400,357.700 1038.700,359" f="#141414" />
        <P p="1027.300,360.300 1061.400,357.700 1049,394.300 1017,397.300" f="#7a7a7a" />

        <P p="1137.900,314.300 1152.700,349 1135.100,386 1121.300,352.300" f="#141414" />
        <P p="1137.900,314.300 1170.600,311.300 1155.400,347 1152.700,349" f={GREY} />
        <P p="1170.600,311.300 1186,345.700 1152.700,349" f="#141414" />
        <P p="1152.700,349 1186,345.700 1166.500,382.700 1135.100,386" f="#7a7a7a" />

        <path d="M816.700 352V388a17.300 13.500 0 0 0 34.600 0V352z" fill="url(#cylOut)" />
        <ellipse cx="834.300" cy="351" rx="17.800" ry="13.500" fill="url(#cylIn)" />
      </g>

      <g fill="#9494b8">
        <path d="M1379 150l5 4.500h-10zM1379 204l5-4.500h-10zM1352 177l5-5v10zM1406.500 177l-5-5v10z" />
        <path d="M1359 163l1-6 2 1.500c3-3 6-5 9-5.500l1 2.500c-3 1-5 2.500-7 5l2 1.500zM1400 163l-1-6-2 1.500c-3-3-6-5-9-5.500l-1 2.500c3 1 5 2.500 7 5l-2 1.500z" />
        <path d="M1389 196l4-2.500 4 2.500v4.500l-4 2-4-2z" />
      </g>
      <path d="M1367 164l5-3.500h16l5 3.500 1.500 17-3 9-9 3h-10l-4-4-2-9z" fill="#9fa3ac" />
      <path d="M1369 161.500h19l3 16h-24z" fill="#e2e4e8" stroke="#c0c3ca" />
      <path d="M1367 177.500h24l3 4-24 2-3-2z" fill="#b6bac2" />
      <path d="M1370 184l22-2-2 7-20 2.500z" fill="#eceef0" />
      <path d="M1371 193.500l13-1.500" stroke="#c02030" strokeWidth="1.500" />
      <path d="M1368.500 184v8" stroke="#20a040" strokeWidth="1.200" />
      <text x="1380" y="172" textAnchor="middle" fontSize="5.500" fontWeight="700" fontFamily="Lato, sans-serif" fill="#222">TOP</text>
      <text x="1381" y="188.500" textAnchor="middle" fontSize="4.500" fontWeight="700" fontFamily="Lato, sans-serif" fill="#222">FRONT</text>

      <path d="M1375.500 797v-10" stroke="#16206c" strokeWidth="1.500" />
      <path d="M1376 797l16-1.500" stroke="#b02c34" strokeWidth="1.200" />
      <path d="M1390 793l8 2.500-8 2.500z" fill="#b82830" />
      <path d="M1371.500 784l3-4 2 5-3 2z" fill="#28a040" />
      <path d="M1375.500 780l3.500 5c-1 3.500-5.500 3.500-6.500 0z" fill="#1c2896" />
      <g fontSize="5" fontFamily="Lato, sans-serif" fill="#333350">
        <text x="1373" y="780.500">Y</text><text x="1376.500" y="781.500">Z</text><text x="1399" y="796">X</text>
      </g>
    </svg>
  );
}

const DocTab = ({ label, active }) => (
  <div className={"flex h-[17px] items-center pl-2 " + (active ? "bg-white pr-2.5" : "bg-[#ececf0] pr-2.5")}>
    <button type="button" role="tab" aria-selected={!!active} className="flex items-center gap-1 text-[#222]">
      <Logo className="h-3 w-3" />
      {label}
    </button>
    <button type="button" aria-label={"Close " + label} className={"ml-[3px] flex h-2.5 w-2.5 items-center justify-center rounded-[2px] " + (active ? "bg-[#d9694a]" : "bg-[#b9b9b9]")}>
      <svg viewBox="0 0 6 6" className="h-1.5 w-1.5" stroke="#fff" strokeWidth="1.400"><path d="M1 1l4 4M5 1l-4 4" /></svg>
    </button>
  </div>
);

export default function App() {
  return (
    <div className="flex h-screen flex-col overflow-hidden bg-[#f0f0f0] font-['Lato','Liberation_Sans',sans-serif] text-[9px] leading-3 text-[#1c1c1c]">
      <Gradients />
      <header className="relative flex h-3.5 shrink-0 items-center bg-white pl-[5px]">
        <Logo className="h-3 w-3" />
        <h1 className="ml-px flex-1 text-[#333]">FreeCAD 0.19</h1>
        <span className="absolute top-0 left-1/2 flex h-px w-44 -translate-x-1/2 justify-center bg-[#c8ccd0]">
          <span className="h-px w-9 bg-[#2a90c8]" />
        </span>
        <div className="flex gap-[26px] pr-[13px]">
          <button type="button" aria-label="Minimize"><svg viewBox="0 0 8 8" className="h-2 w-2" stroke="#777"><path d="M1 3.500h7" /></svg></button>
          <button type="button" aria-label="Maximize"><svg viewBox="0 0 8 8" className="h-2 w-2" stroke="#777" fill="none"><path d="M1 0.500h6v6h-6z" /></svg></button>
          <button type="button" aria-label="Close"><svg viewBox="0 0 8 8" className="h-2 w-2" stroke="#666"><path d="M1 0.500l6 6M7 0.500L1 6.500" /></svg></button>
        </div>
      </header>
      <nav className="flex h-[21px] shrink-0 items-center gap-[11px] bg-white pl-[5px] text-[#333]">
        {["File", "Edit", "View", "Tools", "Macro", "Part", "Measure", "Windows", "Help"].map((m) => (
          <button type="button" key={m}>{m}</button>
        ))}
      </nav>

      <div className="flex h-9 shrink-0 items-center border-b border-[#d4d4d4] pb-0.5 pl-[7px]">
        <Tools items={FILE_TOOLS} drop="w-2.5" />
        <div className="flex h-4 w-[111px] items-center border border-[#c4c4c4] bg-[#e4e4e4]">
          <svg viewBox="0 0 11 11" className="ml-[3px] h-[11px] w-[11px] shrink-0" aria-hidden="true">
            <path d="M0.500 2l4-1.500 6 1v7l-4 2-6-1.500z" fill="#2c5596" />
            <path d="M0.500 2l4-1.500 6 1-3.500 1.500z" fill="#6c98d8" />
            <path d="M0.500 2l6.500 1v7.500L0.500 9z" fill="#3e6eb4" />
          </svg>
          <select aria-label="Workbench" defaultValue="Part" className="h-3.5 min-w-0 flex-1 appearance-none bg-transparent pl-0.5 text-[#222]">
            <option>Part</option>
          </select>
          <svg viewBox="0 0 6 4" className="mr-1 h-1 w-1.5" fill="none" stroke="#777"><path d="M0.500 0.500L3 3L5.500 0.500" /></svg>
        </div>
      </div>
      <div className="flex h-[38px] shrink-0 items-center border-b border-[#d4d4d4] pl-[7px]">
        <Tools items={VIEW_TOOLS} drop="w-[9px]" />
        <Drop className="w-[9px]" dim />
      </div>
      <div className="flex h-[38px] shrink-0 items-center border-b-2 border-[#cfcfcf] pl-1.5">
        <Tools items={PART_TOOLS} drop="w-2" dim />
      </div>

      <main className="flex min-h-0 flex-1">
        <div className="flex pb-1"><ComboView /></div>
        <div className="ml-1.5 flex min-w-0 flex-1 flex-col">
          <div className="min-h-0 flex-1 bg-linear-to-b from-[#34346a] to-[#9696aa]">
            <Scene />
          </div>
          <div role="tablist" className="flex h-[18px] shrink-0 items-start border-t border-white">
            <DocTab label="Start page" />
            <DocTab label="ACME Raw canvas hanger : 1*" active />
          </div>
        </div>
        <aside className="ml-[3px] flex w-[187px] shrink-0 flex-col">
          <header className="flex h-4 items-center bg-[#dcdcdc] pr-[5px] pl-1 text-[#333]">
            <span className="flex-1">Report view</span>
            <button type="button" aria-label="Float report view" className="mr-2"><FloatIcon /></button>
            <button type="button" aria-label="Close report view"><CloseIcon /></button>
          </header>
          <div className="flex-1 border border-[#c8c8c8] bg-white px-0.5 pt-px font-['Noto_Sans',sans-serif] text-[#efb73c]">
            <p>03:15:45&nbsp; Part::Extrusion / Extrude: Links go out of the allowed scope</p>
            <p>03:16:25&nbsp; Part::Extrusion / Extrude001: Links go out of the allowed scope</p>
          </div>
        </aside>
      </main>

      <footer className="flex h-5 shrink-0 items-center pl-1 text-[#333]">
        <span className="flex-1">Create a cube solid</span>
        <button type="button" className="flex items-center gap-[3px] pr-[5px] text-[#111]">
          <svg viewBox="0 0 8 10" className="h-2.5 w-2" fill="none" stroke="#222"><rect x="1" y="0.500" width="6" height="9" rx="2.500" /><path d="M4 2v2" /></svg>
          CAD
          <svg viewBox="0 0 6 4" className="h-1 w-1.5"><path d="M0.500 0.500h5L3 3.500z" fill="#111" /></svg>
        </button>
        <span className="h-4 w-px bg-[#e0e0e0]" />
        <span className="ml-[91px] h-4 w-px bg-[#e0e0e0]" />
        <svg viewBox="0 0 13 20" className="h-5 w-[13px]" fill="#bbb"><path d="M12 13v6H6z" /></svg>
      </footer>
    </div>
  );
}
